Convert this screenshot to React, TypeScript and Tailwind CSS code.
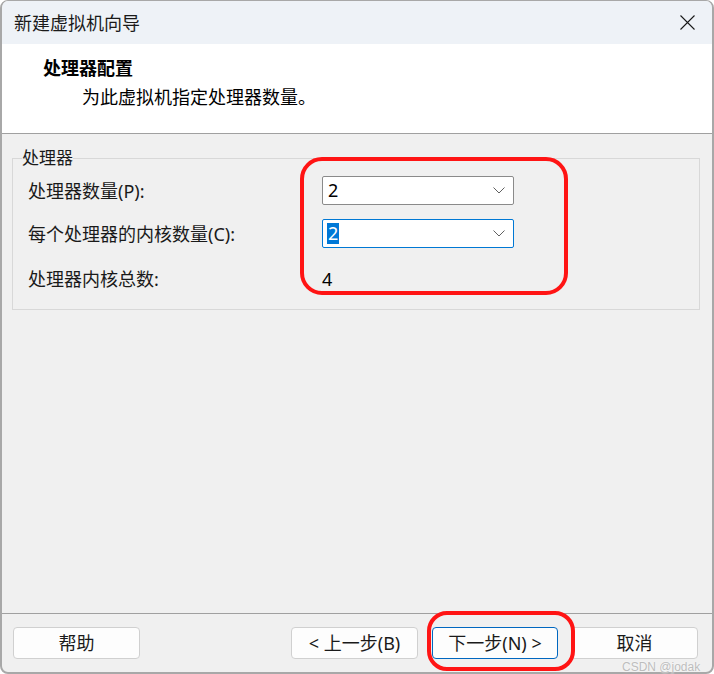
import React from "react";

function Chevron() {
  return (
    <svg width="12" height="7" viewBox="0 0 12 7" fill="none">
      <path d="M0.5 0.5 L6 6 L11.5 0.5" stroke="#606060" strokeWidth="1" />
    </svg>
  );
}

function Combo({ value, focused }: { value: string; focused?: boolean }) {
  return (
    <div
      className={
        focused
          ? "flex h-[29px] w-[192px] items-center justify-between rounded-[2px] border border-[#0078d4] bg-white pl-[4px] pr-[8px]"
          : "flex h-[29px] w-[192px] items-center justify-between rounded-[2px] border border-[#8a8a8a] bg-white pl-[4px] pr-[8px]"
      }
    >
      <span
        className={
          focused
            ? "bg-[#0078d7] px-px text-[18px] leading-[21px] text-white"
            : "px-px text-[18px] leading-[21px] text-black"
        }
      >
        {value}
      </span>
      <Chevron />
    </div>
  );
}

function Btn({ children, primary }: { children: React.ReactNode; primary?: boolean }) {
  return (
    <button
      className={
        primary
          ? "flex h-[32px] w-[126px] items-center justify-center rounded-[4px] border border-[#0067c0] bg-[#fdfdfd] text-[18px] leading-none text-[#1a1a1a]"
          : "flex h-[32px] w-[127px] items-center justify-center rounded-[4px] border border-[#d0d0d0] bg-[#fdfdfd] text-[18px] leading-none text-[#1a1a1a]"
      }
    >
      {children}
    </button>
  );
}

export default function App() {
  return (
    <div className="relative h-[674px] w-[714px] bg-white font-['Noto_Sans','Noto_Sans_CJK_SC',sans-serif] text-[#1a1a1a]">
      <div className="flex h-full flex-col overflow-hidden rounded-[8px] border-x-2 border-t border-b-2 border-[#a8a8a8] bg-[#f0f0f0]">
        {/* Title bar */}
        <div className="flex h-[43px] items-center justify-between bg-[#eef2f7] pl-[12px] pr-[17px]">
          <span className="text-[18px] leading-none">新建虚拟机向导</span>
          <svg width="15" height="15" viewBox="0 0 15 15" fill="none">
            <path d="M0.5 0.5 L14.5 14.5 M14.5 0.5 L0.5 14.5" stroke="#1a1a1a" strokeWidth="1.1" />
          </svg>
        </div>

        {/* Header */}
        <div className="h-[89px] bg-white pt-[12px]">
          <div className="pl-[41px] text-[18px] font-bold leading-[24px] text-black">处理器配置</div>
          <div className="mt-[5px] pl-[80px] text-[18px] leading-[24px] text-black">为此虚拟机指定处理器数量。</div>
        </div>
        <div className="h-px bg-[#a0a0a0]" />

        {/* Body */}
        <div className="flex-1 pl-[10px] pr-[12px] pt-[15px]">
          <fieldset className="border border-[#d8d8d8] px-[9px] pb-[16px]">
            <legend className="text-[17px] leading-[18px]">处理器</legend>
            <div className="flex flex-col pl-[6px] pt-[9px] text-[18px]">
              <div className="flex h-[29px] items-center">
                <span className="w-[294px] leading-none">处理器数量(P):</span>
                <Combo value="2" />
              </div>
              <div className="mt-[14px] flex h-[29px] items-center">
                <span className="w-[294px] leading-none">每个处理器的内核数量(C):</span>
                <Combo value="2" focused />
              </div>
              <div className="mt-[17px] flex h-[28px] items-center">
                <span className="w-[294px] leading-none">处理器内核总数:</span>
                <span className="leading-none text-black">4</span>
              </div>
            </div>
          </fieldset>
        </div>

        <div className="h-px bg-[#a0a0a0]" />

        {/* Footer */}
        <div className="flex h-[58px] items-start pl-[11px] pr-[14px] pt-[13px]">
          <Btn>帮助</Btn>
          <div className="flex-1" />
          <Btn>&lt; 上一步(B)</Btn>
          <div className="w-[14px]" />
          <Btn primary>下一步(N) &gt;</Btn>
          <div className="w-[13px]" />
          <Btn>取消</Btn>
        </div>
      </div>

      {/* Red annotation rings */}
      <div className="pointer-events-none absolute left-[300px] top-[157px] h-[138px] w-[268px] rounded-[22px] border-4 border-[#ff1414]" />
      <div className="pointer-events-none absolute left-[427px] top-[611px] h-[60px] w-[148px] rounded-[20px] border-4 border-[#ff1414]" />

      {/* Watermark */}
      <div className="pointer-events-none absolute left-[622px] top-[661px] font-['Liberation_Sans',sans-serif] text-[12px] leading-none text-[#bdbdbd] [text-shadow:0_0_2px_#ffffff]">
        CSDN @jodak
      </div>
    </div>
  );
}
